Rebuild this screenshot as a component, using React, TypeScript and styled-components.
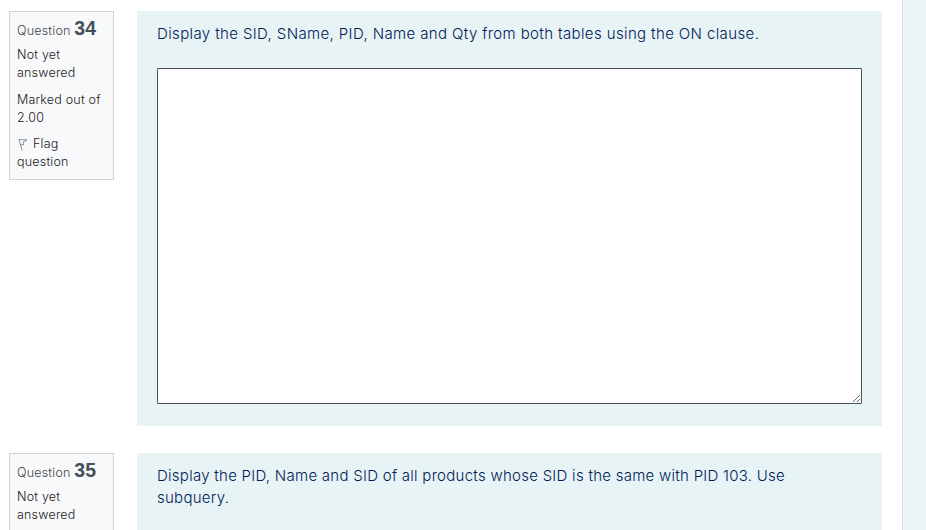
import React from "react";
import styled, { createGlobalStyle } from "styled-components";

const Global = createGlobalStyle`
  html, body { margin: 0; padding: 0; background: #fff; overflow: hidden; }
  body { font-family: "Inter", "Open Sans", sans-serif; }
`;

const Page = styled.div`
  display: flex;
  width: 926px;
  height: 530px;
  overflow: hidden;
`;

const Main = styled.main`
  width: 882px;
  padding: 11px 0 0 9px;
  box-sizing: border-box;
  display: flex;
  flex-direction: column;
  gap: 27px;
  flex: none;
`;

const Side = styled.aside`
  margin-left: 20px;
  flex: 1;
  background: #edf4f8;
  border-left: 1px solid #d5e0e4;
`;

const Question = styled.section`
  display: flex;
  align-items: flex-start;
  gap: 23px;
  flex: none;
`;

const Info = styled.div`
  width: 105px;
  box-sizing: border-box;
  flex: none;
  background: #f8f9fa;
  border: 1px solid #ced4da;
  padding: 4px 7px 8px;
  font-size: 12.5px;
  font-weight: 350;
  letter-spacing: 0.2px;
  line-height: 18px;
  color: #1d2125;
`;

const Title = styled.div`
  color: #3f464c;
  height: 26px;
  line-height: 24px;
  white-space: nowrap;
`;

const Num = styled.span`
  font-family: "Liberation Sans", sans-serif;
  font-size: 19.5px;
  font-weight: 700;
  letter-spacing: 0;
  color: #454f57;
`;

const Meta = styled.div<{ $gap?: number }>`
  margin-top: ${(p) => p.$gap ?? 0}px;
  white-space: pre-line;
`;

const FlagIcon = styled.svg`
  width: 12px;
  height: 13px;
  margin-right: 4px;
  vertical-align: -3px;
`;

const Content = styled.div<{ $height: number }>`
  flex: 1;
  height: ${(p) => p.$height}px;
  box-sizing: border-box;
  background: #e7f3f5;
  padding: 12px 20px 0;
`;

const Prompt = styled.p<{ $tracking: number }>`
  margin: 0;
  max-width: 680px;
  font-size: 15px;
  font-weight: 350;
  line-height: 22px;
  color: #001a57;
  letter-spacing: ${(p) => p.$tracking}px;
`;

const Answer = styled.textarea`
  display: block;
  width: 705px;
  height: 336px;
  margin-top: 23px;
  box-sizing: border-box;
  border: 1px solid #495057;
  border-radius: 1px;
  background: #fff;
  padding: 4px;
  outline: none;
`;

function Flag() {
  return (
    <FlagIcon viewBox="0 0 12 13" fill="none" stroke="#8a9095" strokeWidth="1">
      <path d="M2 1.5 L5 12.5" />
      <path d="M2 1.5 L10 2 L6 4.2 L7 6.5 L3.4 7" />
    </FlagIcon>
  );
}

export default function App() {
  return (
    <Page>
      <Global />
      <Main>
        <Question>
          <Info>
            <Title>Question <Num>34</Num></Title>
            <Meta $gap={4}>{"Not yet\nanswered"}</Meta>
            <Meta $gap={9}>{"Marked out of\n2.00"}</Meta>
            <Meta $gap={8}><Flag />{"Flag\nquestion"}</Meta>
          </Info>
          <Content $height={415}>
            <Prompt $tracking={0.38}>Display the SID, SName, PID, Name and Qty from both tables using the ON clause.</Prompt>
            <Answer />
          </Content>
        </Question>
        <Question>
          <Info>
            <Title>Question <Num>35</Num></Title>
            <Meta $gap={4}>{"Not yet\nanswered"}</Meta>
          </Info>
          <Content $height={100}>
            <Prompt $tracking={0.27}>Display the PID, Name and SID of all products whose SID is the same with PID 103. Use subquery.</Prompt>
          </Content>
        </Question>
      </Main>
      <Side />
    </Page>
  );
}
